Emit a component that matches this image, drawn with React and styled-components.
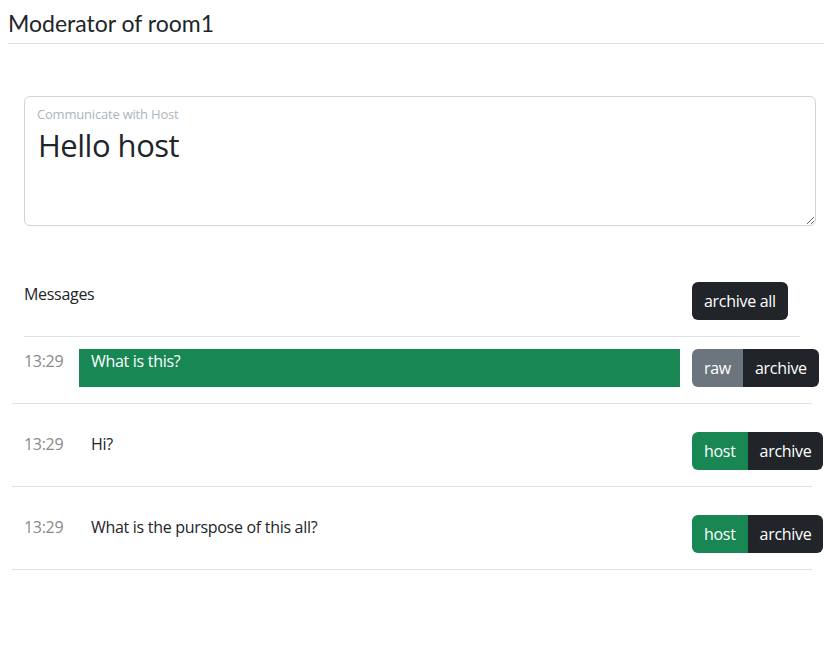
import React from 'react';
import styled, { createGlobalStyle } from 'styled-components';

const GlobalStyle = createGlobalStyle`
  html, body {
    margin: 0;
    padding: 0;
    background: #fff;
    overflow: hidden;
  }
  body {
    font-family: "Open Sans", "Noto Sans", sans-serif;
    font-size: 16px;
    line-height: 24px;
    letter-spacing: -0.3px;
    color: #212529;
  }
  * { box-sizing: border-box; }
`;

const messages = [
  { id: 1, time: '13:29', text: 'What is this?', highlighted: true, tag: 'raw' },
  { id: 2, time: '13:29', text: 'Hi?', tag: 'host' },
  { id: 3, time: '13:29', text: 'What is the purspose of this all?', tag: 'host' },
];

const App = () => (
  <>
    <GlobalStyle />
    <Header>
      <Title>Moderator of room1</Title>
    </Header>
    <Main>
      <FloatingField>
        <FieldLabel>Communicate with Host</FieldLabel>
        <TextArea defaultValue="Hello host" />
      </FloatingField>

      <ListHeader>
        <ListTitle>Messages</ListTitle>
        <Actions>
          <Button variant="dark" rounded>archive all</Button>
        </Actions>
      </ListHeader>

      <List>
        {messages.map((m, i) => (
          <Row key={m.id} first={i === 0}>
            <Time>{m.time}</Time>
            <Body highlighted={m.highlighted}>{m.text}</Body>
            <Actions>
              <Group>
                <Button variant={m.tag === 'raw' ? 'gray' : 'green'}>{m.tag}</Button>
                <Button variant="dark">archive</Button>
              </Group>
            </Actions>
          </Row>
        ))}
      </List>
    </Main>
  </>
);

const Header = styled.header`
  margin-left: 8px;
  width: 816px;
  padding: 9px 0 6px;
  border-bottom: 1px solid #dee2e6;
`;

const Title = styled.h1`
  margin: 0;
  font-family: Lato, "Open Sans", sans-serif;
  font-weight: 400;
  font-size: 23px;
  line-height: 28px;
  letter-spacing: 0;
  color: #212529;
`;

const Main = styled.main`
  width: 800px;
  padding: 52px 0 0 24px;
`;

const FloatingField = styled.div`
  position: relative;
  width: 792px;
`;

const FieldLabel = styled.label`
  position: absolute;
  top: 8px;
  left: 13px;
  font-size: 13px;
  line-height: 20px;
  letter-spacing: -0.2px;
  color: #adb5bd;
  pointer-events: none;
`;

const TextArea = styled.textarea`
  display: block;
  width: 100%;
  height: 130px;
  padding: 28px 12px 8px 13px;
  border: 1px solid #ced4da;
  border-radius: 6px;
  font-family: inherit;
  font-size: 31px;
  line-height: 40px;
  letter-spacing: -0.5px;
  color: #212529;
  resize: vertical;
  outline: none;
`;

const ListHeader = styled.div`
  display: flex;
  align-items: flex-start;
  margin-top: 56px;
  padding-bottom: 16px;
`;

const ListTitle = styled.div`
  width: 668px;
`;

const Actions = styled.div`
  display: flex;
  flex: 0 0 auto;
  white-space: nowrap;
`;

const List = styled.div`
  width: 776px;
  border-top: 1px solid #dee2e6;
`;

const Row = styled.div`
  display: flex;
  align-items: flex-start;
  margin: 0 -12px;
  padding: ${({ first }) => (first ? '12px' : '28px')} 12px 16px;
  border-bottom: 1px solid #dee2e6;
`;

const Time = styled.div`
  width: 55px;
  flex: 0 0 55px;
  color: #8a8a8a;
`;

const Body = styled.div`
  width: 601px;
  flex: 0 0 601px;
  margin-right: 12px;
  padding: 0 12px;
  min-height: ${({ highlighted }) => (highlighted ? '38px' : '24px')};
  background: ${({ highlighted }) => (highlighted ? '#198754' : 'transparent')};
  color: ${({ highlighted }) => (highlighted ? '#fff' : '#212529')};
`;

const Group = styled.div`
  display: inline-flex;
  & > button:first-child { border-radius: 6px 0 0 6px; }
  & > button:last-child { border-radius: 0 6px 6px 0; }
`;

const colors = { dark: '#212529', green: '#198754', gray: '#6c757d' };

const Button = styled.button`
  height: 38px;
  padding: 0 12px;
  border: none;
  border-radius: ${({ rounded }) => (rounded ? '6px' : '0')};
  background: ${({ variant }) => colors[variant]};
  color: #fff;
  font-family: inherit;
  font-size: 16px;
  line-height: 24px;
  letter-spacing: -0.3px;
  cursor: pointer;
`;

export default App;
